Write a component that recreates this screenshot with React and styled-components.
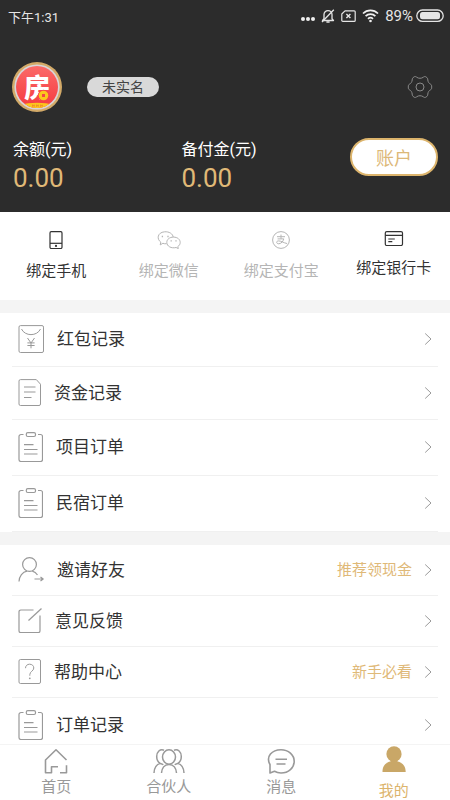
import React from 'react';
import styled, { createGlobalStyle } from 'styled-components';

const BellOff = () => (
    <Svg width="14" height="14" viewBox="0 0 14 14" stroke="#e6e6e6" strokeWidth="1.300">
        <path d="M3 9.800V5.600a4 4 0 0 1 8 0v4.200l1.500 1.700H1.500z" />
        <path d="M5.400 13h3.200M12.800.8L1 13" />
    </Svg>
)
const SimCard = () => (
    <Svg width="15" height="14" viewBox="0 0 15 14" stroke="#e6e6e6" strokeWidth="1.200">
        <path d="M4 1.800h9.200a1 1 0 0 1 1 1v8.600a1 1 0 0 1-1 1H1.800a1 1 0 0 1-1-1V5z" />
        <path d="M5.400 5l4 4M9.400 5l-4 4" strokeWidth="1.400" />
    </Svg>
)
const Wifi = () => (
    <Svg width="17" height="14" viewBox="0 0 17 14" stroke="#f0f0f0" strokeWidth="1.700">
        <path d="M1 4.500a10.600 10.600 0 0 1 15 0M3.600 7.200a6.900 6.900 0 0 1 9.800 0M6 9.800a3.600 3.600 0 0 1 5 0" />
        <circle cx="8.500" cy="12" r="1.300" fill="#f0f0f0" stroke="none" />
    </Svg>
)
const Battery = () => (
    <Svg width="28" height="14" viewBox="0 0 28 14" stroke="#e6e6e6" strokeWidth="1.300">
        <rect x="0.800" y="1" width="26.400" height="11.400" rx="5.700" />
        <rect x="4" y="3.100" width="20" height="7.200" rx="2.500" fill="#e6e6e6" stroke="none" />
    </Svg>
)
const Gear = () => (
    <Svg width="26" height="26" viewBox="0 0 26 26" stroke="#8a8a8a">
        <circle cx="13" cy="13" r="4" />
        <path d="M7.200 2.800C8.200 2.300 9 2.600 9.800 3.300c1.800 1.300 4.600 1.300 6.400 0 .8-.7 1.600-1 2.600-.5 1.700 1 2 1.800 2 3.200.2 2 1.300 3.500 2.900 4.300.9.5 1 1.300 1 2.700s-.1 2.200-1 2.700c-1.600.8-2.700 2.300-2.900 4.300 0 1.400-.3 2.200-2 3.200-1 .5-1.800.2-2.600-.5-1.800-1.300-4.600-1.300-6.400 0-.8.7-1.600 1-2.600.5-1.700-1-2-1.800-2-3.200-.2-2-1.300-3.500-2.900-4.300-.9-.5-1-1.300-1-2.700s.1-2.200 1-2.700c1.600-.8 2.700-2.300 2.900-4.300 0-1.400.3-2.200 2-3.200z" />
    </Svg>
)
const Logo = () => (
    <svg width="50" height="50" viewBox="0 0 50 50">
        <defs>
            <linearGradient id="logoRed" x1="0" y1="0" x2="0" y2="1">
                <stop offset="0" stopColor="#fb6a68" />
                <stop offset="1" stopColor="#f53a40" />
            </linearGradient>
            <clipPath id="logoClip"><circle cx="25" cy="25" r="21" /></clipPath>
        </defs>
        <circle cx="25" cy="25" r="25" fill="#d3aa68" />
        <circle cx="25" cy="25" r="22.600" fill="#d9d5da" />
        <circle cx="25" cy="25" r="21" fill="url(#logoRed)" />
        <g clipPath="url(#logoClip)">
            <path d="M8 43c10-3 24-3 34 0v7H8z" fill="#fbc81d" />
            <path d="M20.500 42.500v2.500M22.200 42.500v2.500M24.500 42.500v2.500M26.200 42.500v2.500M28.500 42.500v2.500M30.200 42.500v2.500M20.500 43.500h2M24.500 43.500h2M28.500 43.500h2" stroke="#f07a2a" strokeWidth="0.600" />
        </g>
        <LogoText x="25" y="35" textAnchor="middle">房</LogoText>
        <circle cx="31.500" cy="33.500" r="5.700" fill="#f5444a" />
        <circle cx="31.500" cy="33.500" r="4.800" fill="#fbc81d" />
        <rect x="30" y="32" width="3" height="3" fill="#f5444a" />
    </svg>
)

const Phone = () => (
    <Svg width="14" height="18" viewBox="0 0 14 18" stroke="#333" strokeWidth="1.200">
        <rect x="1" y="0.700" width="12" height="16.800" rx="1.200" />
        <path d="M1 12.300h12" />
        <circle cx="7" cy="14.900" r="1.100" fill="#333" stroke="none" />
    </Svg>
)
const Wechat = () => (
    <Svg width="24" height="18" viewBox="0 0 24 18" stroke="#b5b5b5">
        <path d="M9.500 12.700c-1.300.2-2.500 0-3.600-.4L3.200 13.900l.6-2.800C-.5 8.200.3 1.500 7.500.800c4.700-.4 8.300 2 8.700 5.300" />
        <path d="M16.500 6.100c4 0 6.700 2.400 6.700 5.300 0 1.800-.9 3.200-2.400 4.200l.5 2-2.200-1.100c-4.800 1.200-9.300-1.200-9.300-5.100 0-3 2.700-5.300 6.700-5.300z" />
        <path d="M5.400 4.800v1.400M11 4.800v1.400M14.200 9.300v1.300M19 9.300v1.300" strokeWidth="1.300" />
    </Svg>
)
const Alipay = () => (
    <Svg width="18" height="18" viewBox="0 0 18 18" stroke="#b5b5b5">
        <circle cx="9" cy="9" r="8.400" />
        <path d="M5 5.700h8M9 3.600v4.200M5.600 7.900h6.200c-.6 2.100-2.300 4.700-5 4.900-2.600.1-2.900-2.700-.4-2.900 2.600-.1 4.800 1.800 8.800 2.700" />
    </Svg>
)
const BankCard = () => (
    <Svg width="20" height="15" viewBox="0 0 20 15" stroke="#333" strokeWidth="1.200">
        <rect x="1.300" y="0.600" width="17.200" height="13.900" rx="1.500" />
        <path d="M1.300 4.300h17.200M4.300 8h6.500M4.300 10.700h4" />
    </Svg>
)

const RedPacket = () => (
    <Svg width="26" height="28" viewBox="0 0 26 28">
        <rect x="1" y="0.600" width="24.500" height="26.900" rx="1.500" />
        <path d="M3.500 4c3.500 7.500 15.500 7.500 19 0" />
        <path d="M9.500 13l3.500 5 3.500-5M13 18v5.300M9.400 17.900h7.200M9.400 20.500h7.200" />
    </Svg>
)
const Fund = () => (
    <Svg width="23" height="27" viewBox="0 0 23 27">
        <path d="M2.500.6h15.800l4.200 4.600v19.800a1.500 1.500 0 0 1-1.500 1.500H2.500A1.500 1.500 0 0 1 1 25V2.100A1.500 1.500 0 0 1 2.500.6z" />
        <path d="M6 8h11.500M6 13h11.500M6 18.500h7.500" />
    </Svg>
)
const Clipboard = () => (
    <Svg width="25" height="30" viewBox="0 0 25 30" strokeWidth="1.200">
        <path d="M5.500 2.500H3a2 2 0 0 0-2 2v23a2 2 0 0 0 2 2h19.500a2 2 0 0 0 2-2v-23a2 2 0 0 0-2-2H20" />
        <rect x="8.300" y="0.700" width="9.200" height="3.800" rx="1.500" />
        <path d="M6 12.600h9.500M6 17.500h13.500M6 22h13.500" />
    </Svg>
)
const Invite = () => (
    <Svg width="26" height="25" viewBox="0 0 26 25" strokeWidth="1.200">
        <circle cx="11.500" cy="7.500" r="6.900" />
        <path d="M1 24.500c.3-5.200 3.500-9.500 8-10.300M14.300 14.200c2.200.5 4 1.900 5.200 3.800" />
        <path d="M16.500 22h8.500M22.500 20l2.700 2-2.700 2" />
    </Svg>
)
const Feedback = () => (
    <Svg width="24" height="25" viewBox="0 0 24 25" strokeWidth="1.200">
        <path d="M15.500 2H2.800A1.800 1.800 0 0 0 1 3.800v19a1.800 1.800 0 0 0 1.800 1.800h17.400a1.800 1.800 0 0 0 1.800-1.800V7.500" />
        <path d="M10.500 12.500L23.500.5" />
    </Svg>
)
const Help = () => (
    <Svg width="23" height="25" viewBox="0 0 23 25">
        <rect x="1" y="0.500" width="21.500" height="24" rx="1.500" />
        <path d="M7.500 9.200c0-2.400 1.700-4 4.100-4s4.200 1.500 4.200 3.800c0 3-4 3.400-4 6.700v1" />
        <circle cx="11.800" cy="19.300" r="0.900" fill="#999" stroke="none" />
    </Svg>
)
const Chevron = () => (
    <Svg width="8" height="12" viewBox="0 0 8 12">
        <path d="M1.200.5L7 6l-5.800 5.500" />
    </Svg>
)

const Home = () => (
    <Svg width="30" height="28" viewBox="0 0 30 28" strokeWidth="1.600">
        <path d="M25.500 14L15 3.800 4.500 14v12.700h6v-6h6.500M19 26.700h6.500v-7.500" />
    </Svg>
)
const Partner = () => (
    <Svg width="32" height="28" viewBox="0 0 32 28" strokeWidth="1.500">
        <ellipse cx="16" cy="11" rx="6.500" ry="7.200" />
        <path d="M8.500 27c.3-4.500 2.800-8.600 7.500-8.600s7.200 4.100 7.500 8.600" />
        <path d="M11 4.200C7 2.600 3.700 6 3.700 10.500c0 3 1.200 5.500 3.600 6.900M1 27c.2-4.300 2.200-8.500 6.300-9.600 1.200.3 2.200.6 3 1.300" />
        <path d="M21 4.200c4-1.600 7.300 1.800 7.300 6.300 0 3-1.200 5.500-3.600 6.900M31 27c-.2-4.300-2.200-8.500-6.300-9.600-1.200.3-2.200.6-3 1.300" />
    </Svg>
)
const Message = () => (
    <Svg width="30" height="28" viewBox="0 0 30 28" strokeWidth="1.600">
        <path d="M4 27V18.500C-.5 10.500 6 3.700 15 3.700c7.500 0 13.200 5 13.200 11.600S22.500 27 15 27c-2.500 0-4.500-.5-6.500-1.700z" />
        <path d="M9.500 13.300h11.500M10.500 18h9" />
    </Svg>
)
const Mine = () => (
    <svg width="30" height="32" viewBox="0 0 30 32" fill="#c9a767">
        <ellipse cx="15" cy="8" rx="7.600" ry="7.800" />
        <path d="M11.500 13h7v2.600c5.500 1 8.200 5 8.200 10.400H3.500c0-5.400 2.500-9.400 8-10.400z" />
    </svg>
)

const binds = [
    { name: '绑定手机', icon: <Phone /> },
    { name: '绑定微信', icon: <Wechat />, disabled: true },
    { name: '绑定支付宝', icon: <Alipay />, disabled: true },
    { name: '绑定银行卡', icon: <BankCard /> },
]
const records = [
    { name: '红包记录', icon: <RedPacket /> },
    { name: '资金记录', icon: <Fund /> },
    { name: '项目订单', icon: <Clipboard /> },
    { name: '民宿订单', icon: <Clipboard /> },
]
const services = [
    { name: '邀请好友', icon: <Invite />, extra: '推荐领现金' },
    { name: '意见反馈', icon: <Feedback /> },
    { name: '帮助中心', icon: <Help />, extra: '新手必看' },
    { name: '订单记录', icon: <Clipboard /> },
]
const tabs = [
    { name: '首页', icon: <Home /> },
    { name: '合伙人', icon: <Partner /> },
    { name: '消息', icon: <Message /> },
    { name: '我的', icon: <Mine />, active: true },
]

const MenuList = ({ items }) => (
    <List>
        {items.map((item) => (
            <li key={item.name}>
                <Row href="#">
                    {item.icon}
                    <RowName>{item.name}</RowName>
                    {item.extra && <RowExtra>{item.extra}</RowExtra>}
                    <Chevron />
                </Row>
            </li>
        ))}
    </List>
)

const App = () => {
    return (
        <Page>
            <GlobalStyle />
            <Content>
                <Header>
                    <StatusBar>
                        <Time>下午1:31</Time>
                        <Dots><i /><i /><i /></Dots>
                        <BellOff />
                        <SimCard />
                        <Wifi />
                        <Power>89%<Battery /></Power>
                    </StatusBar>
                    <Profile>
                        <Logo />
                        <Tag>未实名</Tag>
                        <IconButton aria-label="设置"><Gear /></IconButton>
                    </Profile>
                    <Balances>
                        <div>
                            <BalanceName>余额(元)</BalanceName>
                            <Amount>0.00</Amount>
                        </div>
                        <div>
                            <BalanceName>备付金(元)</BalanceName>
                            <Amount>0.00</Amount>
                        </div>
                        <AccountButton>账户</AccountButton>
                    </Balances>
                </Header>
                <BindBar>
                    {binds.map((bind) => (
                        <BindButton key={bind.name} $disabled={bind.disabled}>
                            {bind.icon}
                            <span>{bind.name}</span>
                        </BindButton>
                    ))}
                </BindBar>
                <MenuList items={records} />
                <MenuList items={services} />
            </Content>
            <TabBar>
                {tabs.map((tab) => (
                    <Tab href="#" key={tab.name} $active={tab.active}>
                        {tab.icon}
                        <span>{tab.name}</span>
                    </Tab>
                ))}
            </TabBar>
        </Page>
    )
}

const GlobalStyle = createGlobalStyle`
  * {
    box-sizing: border-box;
  }
  body {
    margin: 0;
    font-family: Roboto, "Noto Sans CJK SC", sans-serif;
    color: #333;
  }
  button {
    font-family: inherit;
    padding: 0;
    border: 0;
    background: none;
    cursor: pointer;
  }
  a {
    color: inherit;
    text-decoration: none;
  }
  svg {
    display: block;
    flex: none;
  }
`
const Svg = styled.svg.attrs((props) => ({
    fill: 'none',
    stroke: props.stroke || '#999',
    strokeLinejoin: 'round',
}))``
const LogoText = styled.text`
  font-family: "Noto Sans CJK SC", sans-serif;
  font-size: 26px;
  font-weight: 900;
  fill: #fff;
`

const Page = styled.div`
  display: flex;
  flex-direction: column;
  height: 100vh;
  background: #f4f4f4;
`
const Content = styled.main`
  flex: 1;
  min-height: 0;
  overflow-y: auto;
  scrollbar-width: none;
`
const Header = styled.header`
  background: #2c2c2c;
  color: #fff;
  padding-bottom: 18px;
`
const StatusBar = styled.div`
  display: flex;
  align-items: center;
  gap: 6px;
  height: 32px;
  padding: 0 6px 0 8px;
  color: #e6e6e6;
`
const Time = styled.span`
  flex: 1;
  font-size: 13px;
`
const Dots = styled.span`
  display: flex;
  gap: 1px;
  padding-top: 6px;

  i {
    width: 4px;
    height: 4px;
    border-radius: 50%;
    background: #f0f0f0;
  }
`
const Power = styled.span`
  display: flex;
  align-items: center;
  gap: 3px;
  font-size: 15px;
  line-height: 16px;
`
const Profile = styled.div`
  display: flex;
  align-items: center;
  padding: 30px 17px 0 12px;
`
const Tag = styled.span`
  margin-left: 25px;
  width: 72px;
  border-radius: 10px;
  background: #d9d9d9;
  color: #444;
  font-size: 14px;
  line-height: 20px;
  text-align: center;
`
const IconButton = styled.button`
  margin-left: auto;
`
const Balances = styled.div`
  display: grid;
  grid-template-columns: 1fr 1fr auto;
  align-items: start;
  padding: 26px 12px 0 13px;
`
const BalanceName = styled.div`
  font-size: 16px;
  line-height: 24px;
`
const Amount = styled.div`
  color: #e0b977;
  font-size: 26px;
  line-height: 32px;
`
const AccountButton = styled.button`
  && {
    width: 88px;
    height: 38px;
    border: 2px solid #dcb46c;
    border-radius: 19px;
    background: #fff;
    color: #dcb878;
    font-size: 18px;
  }
`
const BindBar = styled.div`
  display: grid;
  grid-template-columns: repeat(4, 1fr);
  height: 88px;
  background: #fff;
`
const BindButton = styled.button`
  && {
    display: flex;
    flex-direction: column;
    align-items: center;
    gap: 12px;
    padding-top: 19px;
    color: ${(props) => (props.$disabled ? '#b5b5b5' : '#333')};
    font-size: 15px;
    line-height: 20px;
  }
`
const List = styled.ul`
  list-style: none;
  margin: 13px 0 0;
  padding: 0 12px;
  background: #fff;
`
const Row = styled.a`
  display: flex;
  align-items: center;
  padding: 12px 6px 13px;
  border-bottom: 1px solid #f0f0f0;
`
const RowName = styled.span`
  flex: 1;
  margin-left: 13px;
  font-size: 17px;
  line-height: 24px;
`
const RowExtra = styled.span`
  margin-right: 12px;
  color: #dfb978;
  font-size: 15px;
  line-height: 24px;
`
const TabBar = styled.nav`
  display: grid;
  grid-template-columns: repeat(4, 1fr);
  height: 56px;
  padding-top: 1px;
  border-top: 1px solid #f4f4f4;
  background: #fff;
`
const Tab = styled.a`
  display: flex;
  flex-direction: column;
  align-items: center;
  gap: 4px;
  color: ${(props) => (props.$active ? '#dcb46c' : '#999')};
  font-size: 15px;
  line-height: 18px;
`

export default App;
